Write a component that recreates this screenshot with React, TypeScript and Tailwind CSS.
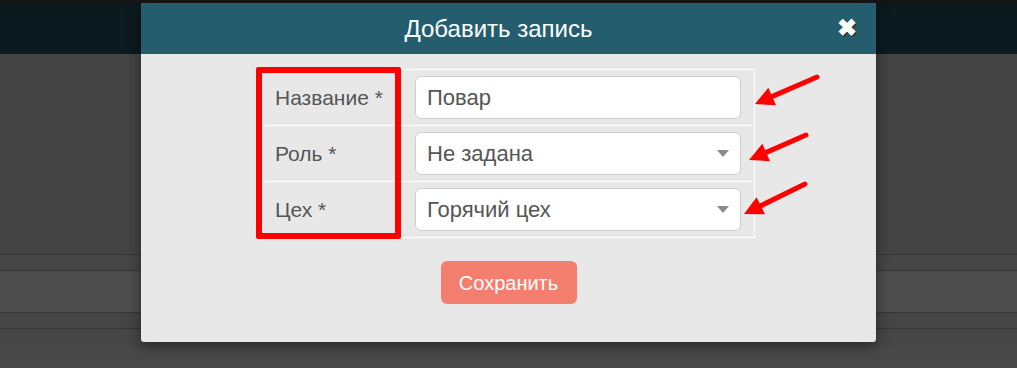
import React from 'react';

const Caret = () => (
    <svg width="12" height="7" viewBox="0 0 12 7" className="shrink-0">
        <path d="M0 0 L12 0 L6 7 Z" fill="#8a8a8a" />
    </svg>
);

const Arrow = ({ x1, y1, x2, y2 }: { x1: number; y1: number; x2: number; y2: number }) => {
    const a = Math.atan2(y2 - y1, x2 - x1);
    const len = 21;
    const w = 0.47;
    const p1 = [x2 - len * Math.cos(a - w), y2 - len * Math.sin(a - w)];
    const p2 = [x2 - len * Math.cos(a + w), y2 - len * Math.sin(a + w)];
    const bx = x2 - 14 * Math.cos(a);
    const by = y2 - 14 * Math.sin(a);
    return (
        <g>
            <line x1={x1} y1={y1} x2={bx} y2={by} stroke="#f00" strokeWidth="5" strokeLinecap="round" />
            <polygon points={`${x2},${y2} ${p1[0]},${p1[1]} ${p2[0]},${p2[1]}`} fill="#f00" />
        </g>
    );
};

const rows = [
    { label: 'Название *', value: 'Повар', select: false },
    { label: 'Роль *', value: 'Не задана', select: true },
    { label: 'Цех *', value: 'Горячий цех', select: true },
];

export default function App() {
    return (
        <div className="relative h-[368px] w-[1017px] overflow-hidden bg-[#444444] font-['Liberation_Sans',Arial,sans-serif]">
            {/* page behind the modal */}
            <div className="h-[3px] bg-[#161616]" />
            <div className="h-[51px] bg-[#0b1a1f]" />
            <div className="h-[200px] bg-[#444444]" />
            <div className="h-[16px] border-t border-[#363636] bg-[#464646]" />
            <div className="h-[42px] border-t border-[#363636] bg-[#4d4d4d]" />
            <div className="h-[16px] border-t border-[#363636] bg-[#454545]" />
            <div className="h-[20px] border-t border-[#363636] bg-[#464646]" />
            <div className="h-[20px] bg-[#484848]" />

            {/* modal */}
            <div className="absolute left-[141px] top-[3px] w-[735px] overflow-hidden rounded-[3px] bg-[#e8e8e8] shadow-[0_4px_14px_rgba(0,0,0,0.45)]">
                <div className="relative flex h-[51px] items-center justify-center bg-[#245e6e] pr-[20px]">
                    <span className="text-[24px] text-white">Добавить запись</span>
                    <span className="absolute right-[19px] top-[13px] text-[24px] font-bold leading-none text-white [text-shadow:1px_1px_1px_rgba(0,0,0,0.6)]">
                        ✖
                    </span>
                </div>

                <div className="flex flex-col pb-[38px] pt-[15px]">
                    <div className="ml-[115px] w-[499px] border-t border-r border-white">
                        {rows.map((r) => (
                            <div key={r.label} className="flex h-[56px] border-b border-white">
                                <div className="flex w-[145px] items-center pl-[19px] text-[21px] text-[#555555]">
                                    {r.label}
                                </div>
                                <div className="flex flex-1 items-center pl-[14px] pr-[13px]">
                                    <div className="flex h-[43px] flex-1 items-center justify-between rounded-[6px] border border-[#cccccc] bg-white pl-[11px] pr-[11px] text-[22px] text-[#555555]">
                                        <span>{r.value}</span>
                                        {r.select && <Caret />}
                                    </div>
                                </div>
                            </div>
                        ))}
                    </div>

                    <button className="mx-auto mt-[23px] h-[43px] w-[136px] rounded-[6px] bg-[#f47f6f] text-[20px] text-white">
                        Сохранить
                    </button>
                </div>
            </div>

            {/* annotation: red box and arrows */}
            <div className="absolute left-[256px] top-[67px] h-[172px] w-[145px] rounded-[2px] border-[6px] border-[#ff0000]" />
            <svg className="absolute left-0 top-0" width="1017" height="368">
                <Arrow x1={817} y1={77} x2={755} y2={104} />
                <Arrow x1={806} y1={135} x2={749} y2={160} />
                <Arrow x1={805} y1={184} x2={744} y2={214} />
            </svg>
        </div>
    );
}
